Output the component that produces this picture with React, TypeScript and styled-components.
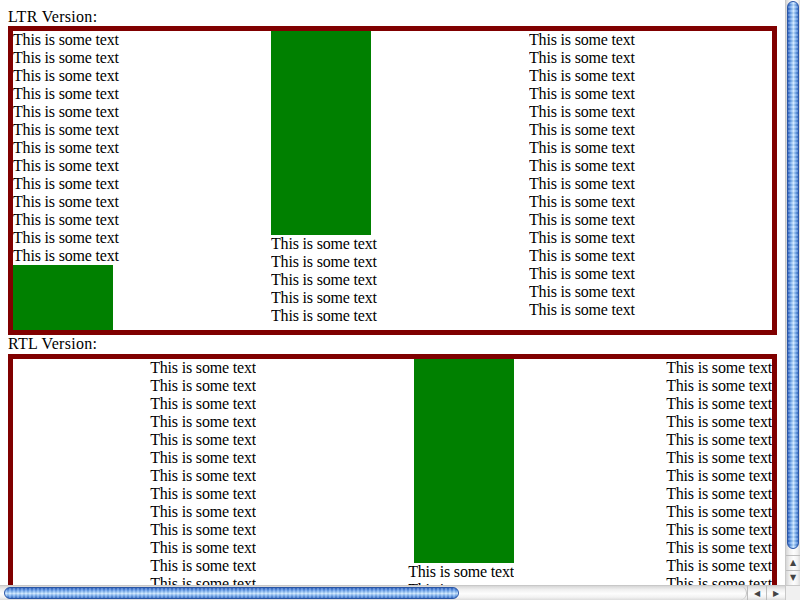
import React from "react";
import styled, { createGlobalStyle } from "styled-components";

const GlobalStyle = createGlobalStyle`
  html, body { margin: 0; padding: 0; overflow: hidden; background: #fff; }
  body { font-family: "Liberation Serif", "Times New Roman", serif; }
`;

const Frame = styled.div`
  width: 800px;
  height: 600px;
  display: grid;
  grid-template-columns: 785px 15px;
  grid-template-rows: 585px 15px;
`;

const Viewport = styled.div`
  overflow: hidden;
  padding: 8px;
  box-sizing: border-box;
  font-size: 16px;
  line-height: 18px;
  color: #000;
`;

const Label = styled.div<{ $h?: number }>`
  height: ${(p) => p.$h ?? 18}px;
  white-space: nowrap;
  letter-spacing: 0.3px;
`;

const ColumnBox = styled.div<{ $dir: "ltr" | "rtl" }>`
  direction: ${(p) => p.$dir};
  border: 5px solid #800000;
  width: 759px;
  height: 299px;
  display: grid;
  grid-template-columns: repeat(3, 243px);
  column-gap: 15px;
`;

const Column = styled.div`
  display: flex;
  flex-direction: column;
  align-items: flex-start;
  overflow: hidden;
  min-height: 0;
`;

const Line = styled.div`
  height: 18px;
  white-space: nowrap;
  flex-shrink: 0;
  letter-spacing: -0.18px;
`;

const GreenBlock = styled.div<{ $h: number }>`
  width: 100px;
  height: ${(p) => p.$h}px;
  background: #008000;
  flex-shrink: 0;
`;

/* ---------- fake aqua scrollbars ---------- */

const VScroll = styled.div`
  display: flex;
  flex-direction: column;
  background: linear-gradient(to right, #d6d6d6 0%, #efefef 25%, #fdfdfd 55%, #f2f2f2 80%, #dcdcdc 100%);
  border-left: 1px solid #c8c8c8;
  box-sizing: border-box;
`;

const VTrack = styled.div`
  flex: 1;
  display: flex;
  flex-direction: column;
  padding: 1px 1px 0 1px;
`;

const VThumb = styled.div`
  height: 548px;
  border-radius: 7px;
  border: 1px solid #2a56a6;
  box-sizing: border-box;
  background:
    repeating-linear-gradient(to bottom, rgba(255,255,255,0.2) 0 2px, rgba(0,0,0,0.05) 2px 4px),
    linear-gradient(to right, #2f63c0 0%, #5f98e8 22%, #a4cdf9 45%, #c6e3ff 55%, #74abef 78%, #3a70c8 100%);
`;

const ArrowBtn = styled.div<{ $h?: number }>`
  height: ${(p) => (p.$h ? p.$h + "px" : "auto")};
  display: flex;
  align-items: center;
  justify-content: center;
  color: #444;
  font-family: "DejaVu Sans", sans-serif;
  font-size: 8px;
  line-height: 1;
  border-top: 1px solid #bdbdbd;
  box-sizing: border-box;
`;

const HScroll = styled.div`
  display: flex;
  background: linear-gradient(to bottom, #d6d6d6 0%, #efefef 25%, #fdfdfd 55%, #f2f2f2 80%, #dcdcdc 100%);
  border-top: 1px solid #c8c8c8;
  box-sizing: border-box;
`;

const HTrack = styled.div`
  flex: 1;
  display: flex;
  align-items: center;
  padding: 0 0 0 4px;
  border-right: 1px solid #c4c4c4;
  border-radius: 0 8px 8px 0;
`;

const HThumb = styled.div`
  width: 455px;
  height: 12px;
  border-radius: 7px;
  border: 1px solid #2a56a6;
  box-sizing: border-box;
  background:
    repeating-linear-gradient(to right, rgba(255,255,255,0.2) 0 2px, rgba(0,0,0,0.05) 2px 4px),
    linear-gradient(to bottom, #2f63c0 0%, #5f98e8 22%, #a4cdf9 45%, #c6e3ff 55%, #74abef 78%, #3a70c8 100%);
`;

const HArrows = styled.div`
  display: flex;
  width: 38px;
`;

const HArrow = styled.div`
  flex: 1;
  display: flex;
  align-items: center;
  justify-content: center;
  color: #444;
  font-family: "DejaVu Sans", sans-serif;
  font-size: 8px;
  border-left: 1px solid #bdbdbd;
`;

const Corner = styled.div`
  background: #f0f0f0;
  border-top: 1px solid #c8c8c8;
  border-left: 1px solid #c8c8c8;
  box-sizing: border-box;
`;

const TEXT = "This is some text";

const lines = (n: number) =>
  Array.from({ length: n }, (_, i) => <Line key={i}>{TEXT}</Line>);

export default function App() {
  return (
    <>
      <GlobalStyle />
      <Frame>
        <Viewport>
          <Label>LTR Version:</Label>
          <ColumnBox $dir="ltr">
            <Column>
              {lines(13)}
              <GreenBlock $h={100} />
            </Column>
            <Column>
              <GreenBlock $h={204} />
              {lines(5)}
            </Column>
            <Column>{lines(16)}</Column>
          </ColumnBox>
          <Label $h={19}>RTL Version:</Label>
          <ColumnBox $dir="rtl">
            <Column>{lines(16)}</Column>
            <Column>
              <GreenBlock $h={204} />
              {lines(5)}
            </Column>
            <Column>
              {lines(13)}
              <GreenBlock $h={100} />
            </Column>
          </ColumnBox>
        </Viewport>
        <VScroll>
          <VTrack>
            <VThumb />
          </VTrack>
          <ArrowBtn $h={15}>▲</ArrowBtn>
          <ArrowBtn $h={15}>▼</ArrowBtn>
        </VScroll>
        <HScroll>
          <HTrack>
            <HThumb />
          </HTrack>
          <HArrows>
            <HArrow>◀</HArrow>
            <HArrow>▶</HArrow>
          </HArrows>
        </HScroll>
        <Corner />
      </Frame>
    </>
  );
}
